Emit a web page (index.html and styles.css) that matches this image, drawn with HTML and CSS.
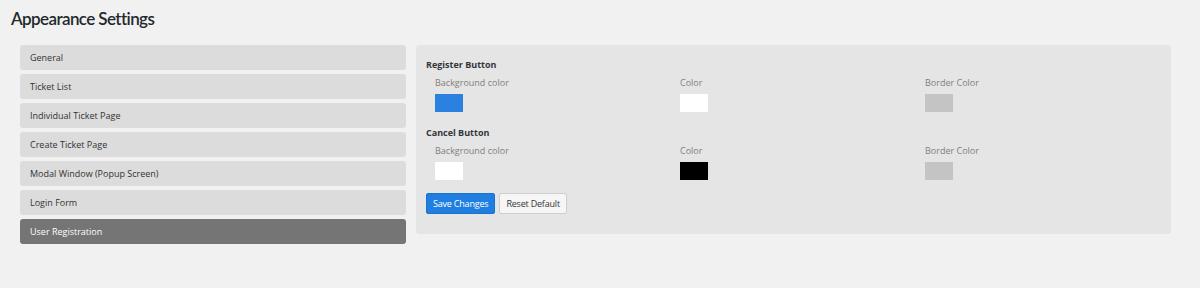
FILE: index.html
```html
<!DOCTYPE html>
<html>
<head>
<meta charset="utf-8">
<link rel="stylesheet" href="styles.css">
</head>
<body>
<div class="wrap">
  <h1 class="title">Appearance Settings</h1>
  <div class="layout">
    <ul class="menu">
      <li class="menu-item">General</li>
      <li class="menu-item">Ticket List</li>
      <li class="menu-item">Individual Ticket Page</li>
      <li class="menu-item">Create Ticket Page</li>
      <li class="menu-item">Modal Window (Popup Screen)</li>
      <li class="menu-item">Login Form</li>
      <li class="menu-item active">User Registration</li>
    </ul>
    <div class="panel">
      <div class="section">
        <div class="heading">Register Button</div>
        <div class="fields">
          <div class="field"><div class="label">Background color</div><div class="swatch blue"></div></div>
          <div class="field"><div class="label">Color</div><div class="swatch white"></div></div>
          <div class="field"><div class="label">Border Color</div><div class="swatch gray"></div></div>
        </div>
      </div>
      <div class="section">
        <div class="heading">Cancel Button</div>
        <div class="fields">
          <div class="field"><div class="label">Background color</div><div class="swatch white"></div></div>
          <div class="field"><div class="label">Color</div><div class="swatch black"></div></div>
          <div class="field"><div class="label">Border Color</div><div class="swatch gray"></div></div>
        </div>
      </div>
      <div class="actions">
        <button class="btn primary">Save Changes</button>
        <button class="btn secondary">Reset Default</button>
      </div>
    </div>
  </div>
</div>
</body>
</html>
```
FILE: styles.css
```css
* { box-sizing: border-box; }
html, body { margin: 0; padding: 0; }
body {
  background: #f1f1f1;
  font-family: "Open Sans", "Noto Sans", sans-serif;
  color: #32373c;
  width: 1200px;
  height: 288px;
  overflow: hidden;
}
.wrap { padding: 7px 30px 0 11px; }
.title {
  margin: 0;
  font-family: Lato, "Open Sans", sans-serif;
  font-weight: 600;
  font-size: 17px;
  letter-spacing: -0.6px;
  line-height: 24px;
  color: #23282d;
}
.layout {
  display: flex;
  gap: 10px;
  margin-top: 14px;
  padding-left: 9px;
}
.menu {
  list-style: none;
  margin: 0;
  padding: 0;
  width: 386px;
  flex: none;
  display: flex;
  flex-direction: column;
  gap: 4px;
}
.menu-item {
  height: 25px;
  background: #dcdcdc;
  border-radius: 3px;
  padding: 1px 0 0 10px;
  font-size: 9px;
  line-height: 24px;
  color: #333;
}
.menu-item.active {
  background: #757575;
  color: #fff;
}
.panel {
  flex: 1;
  background: #e5e5e5;
  border-radius: 3px;
  padding: 14px 10px 19px 10px;
  height: 189px;
}
.heading {
  font-size: 9px;
  font-weight: 700;
  line-height: 12px;
  color: #32373c;
}
.fields {
  display: grid;
  grid-template-columns: 245px 245px 245px;
  padding-top: 6px;
}
.field { padding-left: 9px; }
.label {
  font-size: 9px;
  line-height: 12px;
  color: #808080;
}
.swatch {
  width: 28px;
  height: 18px;
  margin-top: 5px;
  border: 1px solid #dcdcdc;
}
.swatch.blue { background: #2a81e0; border-color: #2a81e0; }
.swatch.white { background: #fff; border-color: #fff; }
.swatch.gray { background: #c4c4c4; border-color: #c4c4c4; }
.swatch.black { background: #000; border-color: #000; }
.section + .section { margin-top: 15px; }
.actions {
  display: flex;
  gap: 4px;
  margin-top: 13px;
}
.btn {
  height: 21px;
  padding: 0 6px;
  font-family: "Open Sans", sans-serif;
  font-size: 9px;
  letter-spacing: -0.2px;
  border-radius: 2px;
  cursor: pointer;
}
.btn.primary {
  background: #1f7ee0;
  border: 1px solid #1a72cc;
  color: #fff;
}
.btn.secondary {
  background: #f6f6f6;
  border: 1px solid #cfcfcf;
  color: #333;
}
```
